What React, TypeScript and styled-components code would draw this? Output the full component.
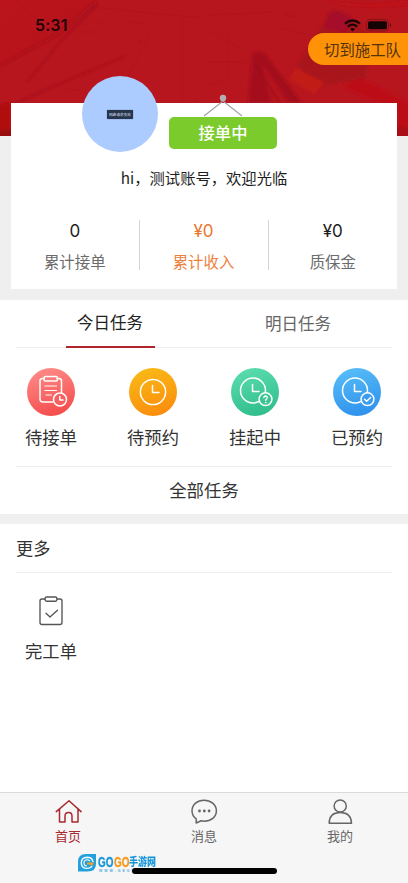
import React from 'react';
import styled, { createGlobalStyle } from 'styled-components';

const GlobalStyle = createGlobalStyle`
  * { box-sizing: border-box; }
  body { margin: 0; background: #fff; font-family: "Noto Sans CJK SC", sans-serif; color: #333; }
  svg { display: block; }
`;

const Screen = styled.div`
  width: 408px; height: 883px; overflow: hidden;
  display: flex; flex-direction: column; background: #fff;
`;
const Hero = styled.header`
  position: relative; height: 300px; flex: none; background: #efefef;
`;
const Backdrop = styled.svg`
  position: absolute; left: 0; top: 0;
`;
const StatusBar = styled.div`
  position: relative; height: 103px; padding: 15px 16px 0 35px;
  display: flex; justify-content: space-between; align-items: flex-start;
`;
const Clock = styled.span`
  font: 600 16px/21px Inter, sans-serif; color: #1f0507; letter-spacing: 0.1px;
`;
const Indicators = styled.div`
  display: flex; gap: 5px; padding-top: 4px;
`;
const SwitchButton = styled.button`
  position: absolute; right: 0; top: 33px; width: 100px; height: 32px;
  border: 0; border-radius: 16px 0 0 16px; background: #ff9206; color: #54330c;
  font: 400 15.4px/30px "Noto Sans CJK SC", sans-serif; padding: 0 6px 1px 16px; text-align: left; white-space: nowrap;
`;
const Card = styled.section`
  position: relative; width: 386px; height: 186px; margin-left: 11px; background: #fff;
`;
const Avatar = styled.div`
  position: absolute; left: 71px; top: -27px; width: 76px; height: 76px;
  border-radius: 50%; background: #accbff; display: flex; align-items: center; justify-content: center;
`;
const AvatarTag = styled.span`
  width: 26px; height: 9px; border-radius: 1px; background: #26344c; box-shadow: 0 0 1px #26344c;
  color: #d7deea; font-size: 3.7px; line-height: 9px; text-align: center; white-space: nowrap;
`;
const Sign = styled.div`
  position: absolute; left: 158px; top: -9px; width: 108px; display: flex; flex-direction: column; align-items: center;
`;
const SignLabel = styled.div`
  width: 108px; height: 32px; border-radius: 5px; background: #7bcb2c; color: #fff;
  font-size: 16.3px; font-weight: 500; line-height: 31px; text-align: center;
`;
const Greeting = styled.p`
  margin: 0; padding-top: 62px; font-size: 15.3px; line-height: 24px; text-align: center; color: #1d1d1d;
`;
const Stats = styled.div`
  display: grid; grid-template-columns: 127.5px 129px 129.5px; margin-top: 31px;
`;
const Stat = styled.div<{ $accent?: boolean }>`
  height: 50px; text-align: center; color: ${p => (p.$accent ? '#ec7731' : '#1d1d1d')};
  & + & { border-left: 1px solid #d5d5d5; }
`;
const StatValue = styled.div`
  font: 400 17px/21px Inter, sans-serif; padding-top: 1px;
`;
const StatName = styled.div<{ $accent?: boolean }>`
  margin-top: 7px; font-size: 15.4px; line-height: 24px; color: ${p => (p.$accent ? '#ec7f40' : '#6b6b6b')};
`;
const Tasks = styled.section`
  height: 214px; flex: none; background: #fff;
`;
const Tabs = styled.div`
  height: 48px; margin: 0 16px; display: flex; justify-content: space-around; border-bottom: 1px solid #ededed;
`;
const Tab = styled.button<{ $active?: boolean }>`
  width: 89px; height: 48px; padding: 0; border: 0; background: none;
  border-bottom: 2px solid ${p => (p.$active ? '#b0252b' : 'transparent')};
  padding-bottom: ${p => (p.$active ? 2 : 0)}px;
  font: 400 16.5px/24px "Noto Sans CJK SC", sans-serif; color: ${p => (p.$active ? '#222' : '#666')};
`;
const TileGrid = styled.div<{ $top: number }>`
  display: grid; grid-template-columns: repeat(4, 102px); padding-top: ${p => p.$top}px;
`;
const Tile = styled.div<{ $gap: number }>`
  display: flex; flex-direction: column; align-items: center; gap: ${p => p.$gap}px;
`;
const TileLabel = styled.span`
  font-size: 17.3px; line-height: 26px; color: #333;
`;
const AllTasks = styled.div`
  margin: 16px 16px 0; border-top: 1px solid #ededed; height: 47px;
  text-align: center; font-size: 17.4px; line-height: 46px; color: #333;
`;
const More = styled.section`
  flex: 1; border-top: 10px solid #f0f0f0; background: #fff;
`;
const MoreTitle = styled.h2`
  margin: 0 16px; height: 49px; border-bottom: 1px solid #ededed;
  font-size: 17.2px; font-weight: 400; line-height: 48px; color: #333;
`;
const BottomBar = styled.nav`
  position: relative; height: 91px; flex: none; background: #f6f6f6; border-top: 1px solid #dadada;
  display: grid; grid-template-columns: repeat(3, 136px);
`;
const NavItem = styled.div<{ $active?: boolean }>`
  display: flex; flex-direction: column; align-items: center; padding-top: 5px;
  color: ${p => (p.$active ? '#a82a30' : '#666')};
  font-size: 13px; line-height: 20px;
`;
const HomeIndicator = styled.div`
  position: absolute; left: 132px; top: 75px; width: 145px; height: 6px; border-radius: 3px; background: #000;
`;
const Watermark = styled.div`
  position: absolute; left: 78px; top: 61px; width: 80px; display: flex; align-items: flex-start; gap: 2px;
`;
const Brand = styled.div`
  display: flex; flex-direction: column;
`;
const BrandName = styled.div`
  display: flex; align-items: center; height: 15px;
`;
const BrandGo = styled.span<{ $color: string }>`
  width: 15.5px; color: ${p => p.$color}; font: 700 15px/15px "Liberation Sans", sans-serif;
  -webkit-text-stroke: 0.4px ${p => p.$color};
  & > b { display: inline-block; transform: scaleX(0.66); transform-origin: left; }
`;
const BrandCjk = styled.span`
  color: #1896d8; font: 900 9px/15px "Noto Sans CJK SC", sans-serif; white-space: nowrap;
  & > b { display: inline-block; transform: scaleY(1.2); }
`;
const BrandUrl = styled.span`
  font: 700 3.5px/4px "Liberation Sans", sans-serif; color: #52a9dc; letter-spacing: 2px; white-space: nowrap; padding-left: 1px;
`;

function HeroArt() {
  return (
    <Backdrop width="408" height="136" viewBox="0 0 408 136">
      <defs>
        <linearGradient id="sheet" x1="0" y1="0" x2="1" y2="1">
          <stop offset="0" stopColor="#bb141c" /><stop offset="0.6" stopColor="#b8131c" /><stop offset="1" stopColor="#a50f18" />
        </linearGradient>
        <filter id="soft"><feGaussianBlur stdDeviation="1.6" /></filter>
      </defs>
      <rect width="408" height="136" fill="#b8161f" />
      <path d="M0 0H98L58 38L0 67Z" fill="url(#sheet)" />
      <g filter="url(#soft)">
        <path d="M0 66L58 34L96 2" stroke="#9c0f18" strokeWidth="2.5" fill="none" opacity=".55" />
        <path d="M27 82L62 40L98 4M0 110L50 88L125 56" stroke="#920f17" strokeWidth="1.8" fill="none" opacity=".55" />
        <path d="M-4 106L11 102V136H-4Z" fill="#b10711" />
        <path d="M-4 130H14V140H-4Z" fill="#970710" />
        <path d="M330 12Q336 8 343 12L372 34L366 78L322 86L296 66L310 46Z" fill="#a8121d" />
        <path d="M330 13Q336 9 352 18L346 32L325 28Z" fill="#a5112a" />
        <path d="M296 68L324 82L314 94L289 79Z" fill="#c21a14" />
        <path d="M248 103L252 54Q260 47 266 56L302 103H288L263 66L272 103Z" fill="#a6101b" />
        <path d="M264 54L297 101M254 62L280 103" stroke="#8d0e17" strokeWidth="1.2" />
        <path d="M362 78L412 104V140H397V112L340 86Z" fill="#bc0e16" />
        <path d="M322 0Q360 8 412 0V4Q360 12 322 0Z" fill="#c01119" />
        <path d="M394 124L412 130V140H394Z" fill="#a90c14" />
      </g>
      <g stroke="#9c131c" strokeWidth=".7" opacity=".5" fill="none">
        <path d="M18 0L34 17M100 8L204 18M182 10V103M150 34L128 76M95 22H103M130 21L144 24M80 32H98M65 90H80M204 15L276 12M211 32L240 48M280 28L312 35M206 62H247M228 32V80" />
        <circle cx="140" cy="42" r="1.4" /><circle cx="197" cy="100" r="1.5" />
        <path d="M144 47L155 38M205 87L222 81M284 15L292 12L296 17L285 15" />
      </g>
    </Backdrop>
  );
}

function WifiIcon() {
  return (
    <svg width="17" height="13" viewBox="0 0 17 13" fill="none" stroke="#1e0405" strokeWidth="2.3">
      <path d="M1 4.6Q8.5-1.7 16 4.6M3.8 7.6Q8.5 3.7 13.2 7.6" /><path d="M6 9.9Q8.5 8 11 9.9L8.5 12.4Z" fill="#1e0405" stroke="none" />
    </svg>
  );
}
function BatteryIcon() {
  return (
    <svg width="26" height="13" viewBox="0 0 26 13">
      <rect x=".5" y=".5" width="22" height="11.5" rx="3.5" fill="none" stroke="#85131a" />
      <rect x="2" y="2.2" width="19" height="8" rx="1.8" fill="#160304" /><path d="M24 4.3Q26 6.2 24 8.2Z" fill="#4a0a0d" />
    </svg>
  );
}

type TaskKind = 'order' | 'book' | 'hold' | 'done';
const tones: Record<TaskKind, [string, string]> = {
  order: ['#ff8a87', '#f44c4c'],
  book: ['#f9b916', '#fb8d0d'],
  hold: ['#5bdcae', '#30bd8c'],
  done: ['#56bdf8', '#2f91ec'],
};

function TaskIcon({ kind }: { kind: TaskKind }) {
  const [from, to] = tones[kind];
  const id = 'tone-' + kind;
  return (
    <svg width="48" height="48" viewBox="0 0 48 48" fill="none" stroke="#fff" strokeWidth="1.5" strokeLinecap="round" strokeLinejoin="round">
      <defs>
        <linearGradient id={id} x1=".3" y1="0" x2=".6" y2="1"><stop stopColor={from} /><stop offset="1" stopColor={to} /></linearGradient>
      </defs>
      <circle cx="24" cy="24" r="24" fill={`url(#${id})`} stroke="none" />
      {kind === 'order' && (
        <>
          <path d="M17 10.5H15.5Q13 10.5 13 13V31Q13 34 16 34H26M30 10.5H32Q34.5 10.5 34.5 13V24.5" />
          <rect x="17" y="8.5" width="13.5" height="4.5" rx="1.5" />
          <path d="M18 18H29.5M18 22.5H29.5M19 27H24.5" strokeWidth="1.2" />
          <circle cx="33" cy="31.5" r="6.5" fill="#f8605e" /><path d="M32.8 28.5V32H36" />
        </>
      )}
      {kind === 'book' && (<><circle cx="24" cy="24" r="12.6" /><path d="M23.5 17.5V24.5H30" /></>)}
      {(kind === 'hold' || kind === 'done') && (
        <>
          <circle cx="22" cy="22.5" r="12.5" /><path d="M21.5 16.5V23.5H28" />
          <circle cx="34.5" cy="31.2" r="6.4" fill={kind === 'hold' ? '#3cc594' : '#3b9df0'} />
          {kind === 'hold'
            ? <><path d="M32.8 29.7Q32.9 28 34.6 28Q36.4 28.2 36.3 29.7Q36.2 30.6 34.7 31.7V32.4" strokeWidth="1.3" /><circle cx="34.7" cy="34.6" r=".35" strokeWidth=".8" /></>
            : <path d="M31.5 31.2L33.7 33.3L37.6 29.5" />}
        </>
      )}
    </svg>
  );
}

function FinishedIcon() {
  return (
    <svg width="24" height="30" viewBox="0 0 24 30" fill="none" stroke="#555" strokeWidth="1.35" strokeLinecap="round" strokeLinejoin="round">
      <path d="M6 3H3Q1 3 1 5V26.5Q1 28.5 3 28.5H21Q23 28.5 23 26.5V5Q23 3 21 3H18" />
      <rect x="6" y="1" width="12" height="4.2" rx="1.7" /><path d="M7 17.3L11 21L18.5 14.3" />
    </svg>
  );
}

function NavIcon({ name }: { name: 'home' | 'chat' | 'user' }) {
  return (
    <svg width="28" height="28" viewBox="0 0 28 28" fill="none" stroke="currentColor" strokeWidth="1.5" strokeLinejoin="round" strokeLinecap="round">
      {name === 'home' && <path d="M2.3 13.6L15 2.8L27.1 13.6M5.5 11V24H11V18.2Q11 14.6 14.6 14.6Q18 14.6 18 18.2V24H24V11" />}
      {name === 'chat' && (
        <><path d="M6.2 20.8Q2 17.9 2 12.8C2 6.4 7.4 2.2 14 2.2S26.4 6.4 26.4 12.8S21 23.2 14 23.2Q12.6 23.2 11.2 22.8L6.2 25Z" />
          <g fill="currentColor" stroke="none"><circle cx="9.5" cy="13" r="1.4" /><circle cx="14.3" cy="13" r="1.4" /><circle cx="19.1" cy="13" r="1.4" /></g></>
      )}
      {name === 'user' && <><circle cx="14.2" cy="8" r="6.1" /><path d="M3.2 25.3Q3.2 14.5 14.2 14.5T25.5 25.3Z" /></>}
    </svg>
  );
}

function BrandMark() {
  return (
    <svg width="18" height="18" viewBox="0 0 18 18">
      <path d="M8 0H18V10Q18 17.5 9.5 17.5H0V8Q0 0 8 0Z" fill="#239fdc" />
      <path d="M15 8Q14.5 3.3 9 3.3Q3.3 3.5 3.3 9Q3.5 14.4 9 14.4Q12.6 14.4 14 12" stroke="#eefaff" strokeWidth="1.4" fill="none" />
      <path d="M12 7Q8 4 6 8Q5.5 11.6 9 12" stroke="#fff" strokeWidth="1.1" fill="none" />
      <path d="M9 8.5H16L14 12L12 10.4H9Z" fill="#f5a128" />
    </svg>
  );
}

const tasks: { kind: TaskKind; label: string }[] = [
  { kind: 'order', label: '待接单' }, { kind: 'book', label: '待预约' },
  { kind: 'hold', label: '挂起中' }, { kind: 'done', label: '已预约' },
];
const stats = [
  { value: '0', name: '累计接单' }, { value: '¥0', name: '累计收入', accent: true }, { value: '¥0', name: '质保金' },
];

export default function App() {
  return (
    <>
      <GlobalStyle />
      <Screen>
        <Hero>
          <HeroArt />
          <StatusBar>
            <Clock>5:31</Clock>
            <Indicators><WifiIcon /><BatteryIcon /></Indicators>
          </StatusBar>
          <SwitchButton>切到施工队</SwitchButton>
          <Card>
            <Avatar><AvatarTag>网络请求失败</AvatarTag></Avatar>
            <Sign>
              <svg width="40" height="23" viewBox="0 0 40 23">
                <path d="M1 22L20 7L39 22M20 4V8" stroke="#a4a0a4" fill="none" strokeWidth="1.1" /><circle cx="20" cy="4" r="3.2" fill="#b3adb2" />
              </svg>
              <SignLabel>接单中</SignLabel>
            </Sign>
            <Greeting>hi，测试账号，欢迎光临</Greeting>
            <Stats>
              {stats.map(s => (
                <Stat key={s.name} $accent={s.accent}>
                  <StatValue>{s.value}</StatValue>
                  <StatName $accent={s.accent}>{s.name}</StatName>
                </Stat>
              ))}
            </Stats>
          </Card>
        </Hero>
        <Tasks>
          <Tabs><Tab $active>今日任务</Tab><Tab>明日任务</Tab></Tabs>
          <TileGrid $top={20}>
            {tasks.map(t => <Tile key={t.kind} $gap={8}><TaskIcon kind={t.kind} /><TileLabel>{t.label}</TileLabel></Tile>)}
          </TileGrid>
          <AllTasks>全部任务</AllTasks>
        </Tasks>
        <More>
          <MoreTitle>更多</MoreTitle>
          <TileGrid $top={23}>
            <Tile $gap={12}><FinishedIcon /><TileLabel>完工单</TileLabel></Tile>
          </TileGrid>
        </More>
        <BottomBar>
          <NavItem $active><NavIcon name="home" />首页</NavItem>
          <NavItem><NavIcon name="chat" />消息</NavItem>
          <NavItem><NavIcon name="user" />我的</NavItem>
          <Watermark>
            <BrandMark />
            <Brand>
              <BrandName>
                <BrandGo $color="#1896d8"><b>GO</b></BrandGo>
                <BrandGo $color="#f79a1d"><b>GO</b></BrandGo>
                <BrandCjk><b>手游网</b></BrandCjk>
              </BrandName>
              <BrandUrl>WWW.GEGRE.CN</BrandUrl>
            </Brand>
          </Watermark>
          <HomeIndicator />
        </BottomBar>
      </Screen>
    </>
  );
}
